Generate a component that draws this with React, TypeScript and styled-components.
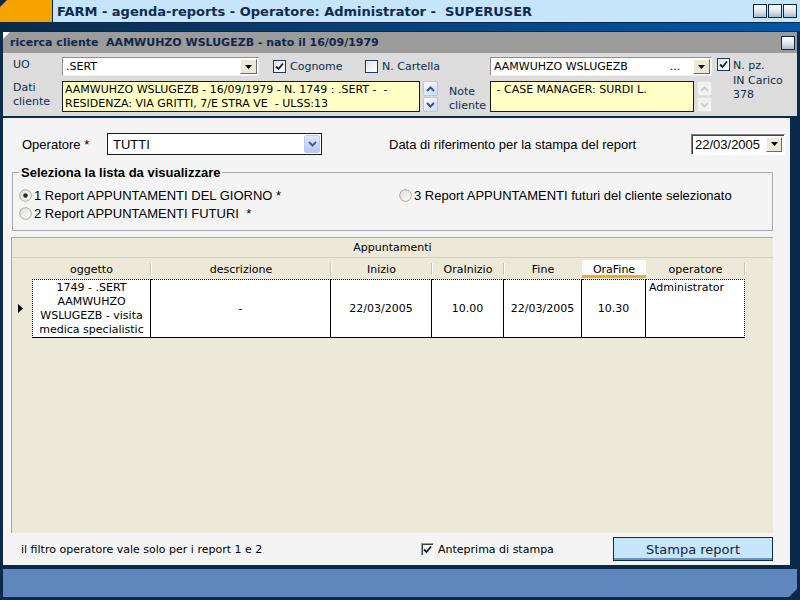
import React from "react";
import styled, { createGlobalStyle, css } from "styled-components";

const VERDANA = `"DejaVu Sans", Verdana, sans-serif`;
const TAHOMA = `"Liberation Sans", Tahoma, Arial, sans-serif`;
const NAVY = "#0b2a4a";

const GlobalStyle = createGlobalStyle`
  html, body { margin: 0; padding: 0; width: 800px; height: 600px; overflow: hidden; background: ${NAVY}; }
  * { box-sizing: border-box; }
`;

const Frame = styled.div`
  width: 800px;
  height: 600px;
  display: flex;
  flex-direction: column;
  background: ${NAVY};
  font-family: ${VERDANA};
  font-size: 11px;
  color: #000;
  overflow: hidden;
`;

/* ---------- title bar ---------- */

const TitleBar = styled.div`
  display: flex;
  height: 23px;
  border-bottom: 1px solid ${NAVY};
`;

const OrangeTab = styled.div`
  width: 52px;
  background: #f6a300;
  clip-path: polygon(7px 0, 100% 0, 100% 100%, 0 100%, 0 7px);
`;

const TitleText = styled.div`
  flex: 1;
  margin-left: 1px;
  background: #c6e4fa;
  display: flex;
  align-items: center;
  padding: 0 3px 0 4px;
  font: bold 13px ${VERDANA};
  color: #0f2c4e;
  white-space: pre;
`;

const WinButtons = styled.div`
  margin-left: auto;
  display: flex;
  gap: 1px;
`;

const WinButton = styled.div`
  width: 14px;
  height: 14px;
  border: 1px solid ${NAVY};
  background: linear-gradient(#ffffff, #dfe8f0 50%, #a9bccd);
`;

const Stripe = styled.div`
  height: 8px;
  margin-bottom: 1px;
  background: linear-gradient(90deg, #0b2a4a 0%, #0a3d72 40%, #0058a8 100%);
`;

/* ---------- client search panel ---------- */

const ClientPanel = styled.div`
  margin: 0 3px;
  display: flex;
  flex-direction: column;
`;

const ClientHeader = styled.div`
  position: relative;
  height: 21px;
  background: #9b9b9b;
  display: flex;
  align-items: center;
  padding: 0 2px 0 7px;
  font: bold 11px ${VERDANA};
  color: #10284a;
  white-space: pre;

  &::before {
    content: "";
    position: absolute;
    left: 0;
    top: 0;
    border-top: 7px solid #fff;
    border-right: 7px solid transparent;
  }
`;

const ClientBody = styled.div`
  height: 63px;
  background: #dcdcdc;
  display: flex;
  padding: 4px 0 0 10px;
  color: #0f2c4e;
`;

const ClientFields = styled.div`
  display: flex;
  flex-direction: column;
  gap: 5px;
`;

const FieldRow = styled.div<{ $h: number }>`
  display: flex;
  align-items: stretch;
  height: ${(p) => p.$h}px;
`;

const FieldLabel = styled.div<{ $w: number; $pad?: number }>`
  width: ${(p) => p.$w}px;
  line-height: 14px;
  padding-top: ${(p) => p.$pad ?? 0}px;
  font-size: 11px;
`;

const ComboBox = styled.div<{ $w: number }>`
  width: ${(p) => p.$w}px;
  display: flex;
  align-items: center;
  background: #fff;
  border: 1px solid #8e8e8e;
  border-right-color: #f0f0f0;
  border-bottom-color: #f0f0f0;
  padding: 1px 1px 1px 3px;
  font-size: 11px;
  color: #000;
`;

const ComboText = styled.div`
  flex: 1;
  white-space: pre;
  overflow: hidden;
`;

const ClassicButton = styled.div<{ $w?: number }>`
  width: ${(p) => p.$w ?? 17}px;
  align-self: stretch;
  display: flex;
  align-items: center;
  justify-content: center;
  background: #ece9d8;
  border: 1px solid;
  border-color: #fff #6b6b6b #6b6b6b #fff;
`;

const DownTriangle = () => (
  <svg width="7" height="4" viewBox="0 0 7 4">
    <path d="M0 0 H7 L3.5 4 Z" fill="#000" />
  </svg>
);

const CheckItem = styled.div<{ $w?: number; $ml?: number }>`
  width: ${(p) => (p.$w ? `${p.$w}px` : "auto")};
  margin-left: ${(p) => p.$ml ?? 0}px;
  display: flex;
  align-items: center;
  gap: 4px;
  font-size: 11px;
`;

const CheckBoxBox = styled.div<{ $variant: "xp" | "classic" }>`
  width: 13px;
  height: 13px;
  flex: none;
  display: flex;
  align-items: center;
  justify-content: center;
  ${(p) =>
    p.$variant === "xp"
      ? css`
          border: 1px solid #1c3a5e;
          background: linear-gradient(135deg, #e4e4e0, #ffffff);
        `
      : css`
          border: 1px solid;
          border-color: #9a9a9a #ffffff #ffffff #9a9a9a;
          box-shadow: inset 1px 1px 0 #404040;
          background: #f2f2ee;
        `}
`;

const Check = ({ checked = true, variant = "xp" as "xp" | "classic" }) => (
  <CheckBoxBox $variant={variant}>
    {checked && (
      <svg width="9" height="9" viewBox="0 0 9 9">
        <path d="M1 4.5 L3.5 7 L8 1.5" fill="none" stroke="#0b1c33" strokeWidth="1.8" />
      </svg>
    )}
  </CheckBoxBox>
);

const NoteBox = styled.div<{ $w: number }>`
  width: ${(p) => p.$w}px;
  background: #ffffc6;
  border: 1px solid #1a1a1a;
  padding: 1px 2px;
  line-height: 14px;
  font-size: 11px;
  color: #000;
  white-space: pre;
  overflow: hidden;
`;

const ScrollCol = styled.div`
  width: 15px;
  margin-left: 3px;
  display: flex;
  flex-direction: column;
  gap: 1px;
`;

const ScrollBtn = styled.div<{ $disabled?: boolean }>`
  flex: 1;
  display: flex;
  align-items: center;
  justify-content: center;
  border: 1px solid ${(p) => (p.$disabled ? "#e2e2e2" : "#b8c8e8")};
  border-radius: 2px;
  background: ${(p) =>
    p.$disabled ? "#f2f2f0" : "linear-gradient(135deg, #ffffff, #c9d8f6)"};
`;

const Chevron = ({ up, color }: { up?: boolean; color: string }) => (
  <svg width="9" height="6" viewBox="0 0 9 6">
    <path
      d={up ? "M1 5 L4.5 1.5 L8 5" : "M1 1 L4.5 4.5 L8 1"}
      fill="none"
      stroke={color}
      strokeWidth="2"
    />
  </svg>
);

const InCarico = styled.div`
  display: flex;
  gap: 3px;
  margin-left: 5px;
  padding-top: 1px;
`;

const InCaricoText = styled.div`
  line-height: 14.5px;
  padding-top: 1px;
  font-size: 11px;
`;

/* ---------- main panel ---------- */

const MainPanel = styled.div`
  flex: 1;
  margin: 2px 10px 0 3px;
  background: #f4f4f4;
  display: flex;
  flex-direction: column;
  padding-top: 15px;
`;

const TopRow = styled.div`
  height: 22px;
  display: flex;
  align-items: center;
  padding-right: 5px;
  font: 13px ${TAHOMA};
`;

const FormLabel = styled.div<{ $w?: number; $ml?: number }>`
  width: ${(p) => (p.$w ? `${p.$w}px` : "auto")};
  margin-left: ${(p) => p.$ml ?? 0}px;
  white-space: pre;
`;

const XpSelect = styled.div`
  width: 215px;
  height: 22px;
  display: flex;
  align-items: center;
  border: 1px solid #1c1c1c;
  background: #fff;
  padding: 1px 1px 1px 5px;
`;

const XpDropBtn = styled.div`
  width: 16px;
  height: 18px;
  display: flex;
  align-items: center;
  justify-content: center;
  border: 1px solid #b9c9ef;
  border-radius: 2px;
  background: linear-gradient(#dfe8fd, #b7c9f3);
`;

const DateBox = styled.div`
  width: 94px;
  height: 21px;
  margin-left: auto;
  display: flex;
  align-items: center;
  background: #fff;
  border: 1px solid;
  border-color: #808080 #ffffff #ffffff #808080;
  box-shadow: inset 1px 1px 0 #404040;
  padding: 2px 2px 2px 3px;
`;

const Fieldset = styled.fieldset`
  margin: 10px 17px 0 9px;
  padding: 0 6px 8px;
  border: 1px solid #a8a8a8;
  height: 66px;
`;

const Legend = styled.legend`
  margin-left: 0;
  padding: 0 2px;
  font: bold 13px ${TAHOMA};
  color: #000;
`;

const RadioGrid = styled.div`
  margin-top: 6px;
  display: grid;
  grid-template-columns: 380px 1fr;
  grid-auto-rows: 18px;
  font: 13px ${TAHOMA};
`;

const RadioItem = styled.div`
  display: flex;
  align-items: center;
  gap: 2px;
  white-space: pre;
`;

const Radio = ({ checked }: { checked?: boolean }) => (
  <svg width="13" height="13" viewBox="0 0 13 13">
    <defs>
      <linearGradient id="rg" x1="0" y1="0" x2="1" y2="1">
        <stop offset="0" stopColor="#dcdcd6" />
        <stop offset="1" stopColor="#ffffff" />
      </linearGradient>
    </defs>
    <circle cx="6.5" cy="6.5" r="5.8" fill="url(#rg)" stroke="#a6a6a0" />
    {checked && <circle cx="6.5" cy="6.5" r="2.3" fill="#2a2a2a" />}
  </svg>
);

/* ---------- grid ---------- */

const COLS = "20px 119px 180px 101px 72px 78px 64px 99px 1fr";

const GridPanel = styled.div`
  height: 296px;
  margin: 6px 17px 0 8px;
  background: #ece9d8;
  border-top: 1px solid #a9a9a9;
  border-left: 1px solid #a9a9a9;
  display: flex;
  flex-direction: column;
`;

const GridCaption = styled.div`
  height: 20px;
  display: flex;
  align-items: center;
  justify-content: center;
  border-bottom: 1px solid #d6d2c2;
  font-size: 11px;
`;

const HeaderRow = styled.div`
  margin-top: 2px;
  height: 18px;
  display: grid;
  grid-template-columns: ${COLS};
`;

const HeaderCell = styled.div<{ $active?: boolean; $sep?: boolean }>`
  position: relative;
  display: flex;
  align-items: center;
  justify-content: center;
  font-size: 11px;
  background: ${(p) => (p.$active ? "#fcfcf8" : "transparent")};
  ${(p) =>
    p.$active &&
    css`
      box-shadow: inset 0 -3px 0 #f2a92c;
      border-radius: 2px 2px 0 0;
    `}
  ${(p) =>
    p.$sep &&
    css`
      &::after {
        content: "";
        position: absolute;
        right: 0;
        top: 3px;
        bottom: 3px;
        width: 1px;
        background: #c7c3b1;
        box-shadow: 1px 0 0 #fff;
      }
    `}
`;

const DataRow = styled.div`
  margin-top: 1px;
  height: 59px;
  display: grid;
  grid-template-columns: ${COLS};
`;

const RowHeader = styled.div`
  display: flex;
  align-items: center;
  justify-content: center;
  padding-right: 4px;
`;

const Cell = styled.div<{ $align?: "center" | "top"; $first?: boolean; $last?: boolean }>`
  background: #fff;
  border-top: 1px dotted #000;
  border-bottom: 1px solid #000;
  border-right: 1px ${(p) => (p.$last ? "dotted" : "solid")} #000;
  ${(p) => p.$first && "border-left: 1px dotted #000;"}
  display: flex;
  flex-direction: column;
  align-items: ${(p) => (p.$align === "top" ? "flex-start" : "center")};
  justify-content: ${(p) => (p.$align === "top" ? "flex-start" : "center")};
  padding: ${(p) => (p.$align === "top" ? "1px 3px" : "0 2px")};
  font-size: 11px;
  line-height: 14px;
  text-align: center;
  white-space: nowrap;
  overflow: hidden;
`;

/* ---------- footer ---------- */

const Footer = styled.div`
  flex: 1;
  display: flex;
  align-items: center;
  padding: 0 17px 0 18px;
  font-size: 11px;
`;

const FooterNote = styled.div`
  width: 400px;
`;

const PrintButton = styled.div`
  margin-left: auto;
  width: 160px;
  height: 24px;
  display: flex;
  align-items: center;
  justify-content: center;
  background: #c7e5fb;
  border: 1px solid #0f2c4e;
  box-shadow: inset 0 -2px 0 #6f93bf;
  font: 13px ${VERDANA};
  color: #12243c;
`;

const BottomBar = styled.div`
  height: 28px;
  margin: 4px 3px 3px 3px;
  background: #5f87bd;
  clip-path: polygon(0 0, 100% 0, 100% calc(100% - 8px), calc(100% - 8px) 100%, 0 100%);
`;

const columns = [
  { name: "", sep: false },
  { name: "oggetto", sep: true },
  { name: "descrizione", sep: true },
  { name: "Inizio", sep: true },
  { name: "OraInizio", sep: true },
  { name: "Fine", sep: false },
  { name: "OraFine", sep: false, active: true },
  { name: "operatore", sep: true },
  { name: "", sep: false },
];

export default function App() {
  return (
    <>
      <GlobalStyle />
      <Frame>
        <TitleBar>
          <OrangeTab />
          <TitleText>
            FARM - agenda-reports - Operatore: Administrator -  SUPERUSER
            <WinButtons>
              <WinButton />
              <WinButton />
              <WinButton />
            </WinButtons>
          </TitleText>
        </TitleBar>
        <Stripe />

        <ClientPanel>
          <ClientHeader>
            ricerca cliente  AAMWUHZO WSLUGEZB - nato il 16/09/1979
            <WinButtons>
              <WinButton />
            </WinButtons>
          </ClientHeader>
          <ClientBody>
            <ClientFields>
              <FieldRow $h={19}>
                <FieldLabel $w={49} $pad={1}>UO</FieldLabel>
                <ComboBox $w={197}>
                  <ComboText>.SERT</ComboText>
                  <ClassicButton>
                    <DownTriangle />
                  </ClassicButton>
                </ComboBox>
                <CheckItem $w={92} $ml={14}>
                  <Check />
                  Cognome
                </CheckItem>
                <CheckItem $w={125}>
                  <Check checked={false} />
                  N. Cartella
                </CheckItem>
                <ComboBox $w={222}>
                  <ComboText>AAMWUHZO WSLUGEZB            ...</ComboText>
                  <ClassicButton>
                    <DownTriangle />
                  </ClassicButton>
                </ComboBox>
              </FieldRow>
              <FieldRow $h={31}>
                <FieldLabel $w={49} $pad={0}>
                  Dati
                  <br />
                  cliente
                </FieldLabel>
                <NoteBox $w={358}>
                  {"AAMWUHZO WSLUGEZB - 16/09/1979 - N. 1749 : .SERT -  -\nRESIDENZA: VIA GRITTI, 7/E STRA VE  - ULSS:13"}
                </NoteBox>
                <ScrollCol>
                  <ScrollBtn>
                    <Chevron up color="#3a5484" />
                  </ScrollBtn>
                  <ScrollBtn>
                    <Chevron color="#3a5484" />
                  </ScrollBtn>
                </ScrollCol>
                <FieldLabel $w={52} $pad={4}>
                  <span style={{ paddingLeft: 11 }}>Note</span>
                  <br />
                  <span style={{ paddingLeft: 11 }}>cliente</span>
                </FieldLabel>
                <NoteBox $w={204}>{" - CASE MANAGER: SURDI L."}</NoteBox>
                <ScrollCol>
                  <ScrollBtn $disabled>
                    <Chevron up color="#cfcfcf" />
                  </ScrollBtn>
                  <ScrollBtn $disabled>
                    <Chevron color="#cfcfcf" />
                  </ScrollBtn>
                </ScrollCol>
              </FieldRow>
            </ClientFields>
            <InCarico>
              <Check />
              <InCaricoText>
                N. pz.
                <br />
                IN Carico
                <br />
                378
              </InCaricoText>
            </InCarico>
          </ClientBody>
        </ClientPanel>

        <MainPanel>
          <TopRow>
            <FormLabel $w={85} $ml={19}>Operatore *</FormLabel>
            <XpSelect>
              <ComboText>TUTTI</ComboText>
              <XpDropBtn>
                <Chevron color="#4d6185" />
              </XpDropBtn>
            </XpSelect>
            <FormLabel $ml={67}>Data di riferimento per la stampa del report</FormLabel>
            <DateBox>
              <ComboText>22/03/2005</ComboText>
              <ClassicButton $w={16}>
                <DownTriangle />
              </ClassicButton>
            </DateBox>
          </TopRow>

          <Fieldset>
            <Legend>Seleziona la lista da visualizzare</Legend>
            <RadioGrid>
              <RadioItem>
                <Radio checked />
                1 Report APPUNTAMENTI DEL GIORNO *
              </RadioItem>
              <RadioItem>
                <Radio />
                3 Report APPUNTAMENTI futuri del cliente selezionato
              </RadioItem>
              <RadioItem>
                <Radio />
                2 Report APPUNTAMENTI FUTURI  *
              </RadioItem>
            </RadioGrid>
          </Fieldset>

          <GridPanel>
            <GridCaption>Appuntamenti</GridCaption>
            <HeaderRow>
              {columns.map((c, i) => (
                <HeaderCell key={i} $sep={c.sep} $active={c.active}>
                  {c.name}
                </HeaderCell>
              ))}
            </HeaderRow>
            <DataRow>
              <RowHeader>
                <svg width="5" height="9" viewBox="0 0 5 9">
                  <path d="M0 0 L5 4.5 L0 9 Z" fill="#000" />
                </svg>
              </RowHeader>
              <Cell $first>
                <span>1749 - .SERT</span>
                <span>AAMWUHZO</span>
                <span>WSLUGEZB - visita</span>
                <span>medica specialistic</span>
              </Cell>
              <Cell>-</Cell>
              <Cell>22/03/2005</Cell>
              <Cell>10.00</Cell>
              <Cell>22/03/2005</Cell>
              <Cell>10.30</Cell>
              <Cell $align="top" $last>
                Administrator
              </Cell>
            </DataRow>
          </GridPanel>

          <Footer>
            <FooterNote>il filtro operatore vale solo per i report 1 e 2</FooterNote>
            <CheckItem>
              <Check variant="classic" />
              Anteprima di stampa
            </CheckItem>
            <PrintButton>Stampa report</PrintButton>
          </Footer>
        </MainPanel>

        <BottomBar />
      </Frame>
    </>
  );
}
